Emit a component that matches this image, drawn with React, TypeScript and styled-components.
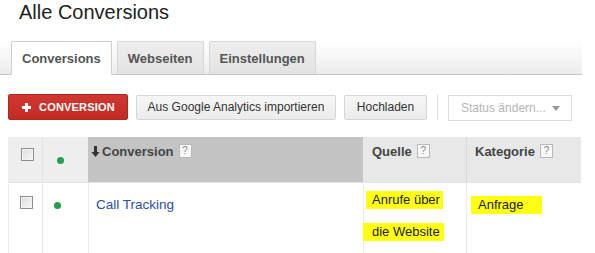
import React from 'react';
import styled, { createGlobalStyle } from 'styled-components';

const GlobalStyle = createGlobalStyle`
  html, body {
    margin: 0;
    padding: 0;
    background: #ffffff;
    font-family: 'Liberation Sans', Arial, sans-serif;
  }
`;

const Page = styled.div`
  width: 595px;
  height: 253px;
  overflow: hidden;
  background: #fff;
`;

const Title = styled.h1`
  margin: 0 0 16px 19px;
  font-size: 20px;
  line-height: 24px;
  font-weight: normal;
  color: #222;
`;

const TabBar = styled.div`
  height: 34px;
  display: flex;
  align-items: flex-end;
  gap: 5px;
  padding-left: 11px;
  margin-right: 13px;
  border-bottom: 1px solid #c6c6c6;
  background: linear-gradient(to bottom, #ffffff 0%, #f6f6f6 55%, #ebebeb 100%);
`;

const Tab = styled.div<{ $active?: boolean }>`
  height: ${({ $active }) => ($active ? '34px' : '33px')};
  margin-bottom: ${({ $active }) => ($active ? '-1px' : '0')};
  padding: 0 10px;
  display: flex;
  align-items: center;
  box-sizing: border-box;
  border: 1px solid ${({ $active }) => ($active ? '#cfcfcf' : '#d6d6d6')};
  border-bottom: ${({ $active }) => ($active ? '1px solid #fff' : 'none')};
  border-radius: 2px 2px 0 0;
  background: ${({ $active }) =>
    $active ? '#ffffff' : 'linear-gradient(to bottom, #eeeeee, #e2e2e2)'};
  font-size: 13px;
  font-weight: bold;
  color: #555;
`;

const Toolbar = styled.div`
  display: flex;
  align-items: center;
  height: 26px;
  margin: 19px 0 0 8px;
`;

const RedButton = styled.button`
  width: 120px;
  height: 26px;
  display: flex;
  align-items: center;
  gap: 8px;
  padding: 0 0 0 13px;
  border: 1px solid #b0271f;
  border-radius: 2px;
  background: linear-gradient(to bottom, #d0382f, #c12b23);
  color: #fff;
  font-family: inherit;
  font-size: 11px;
  font-weight: bold;
  letter-spacing: 0.2px;
`;

const GrayButton = styled.button<{ $width: number }>`
  width: ${({ $width }) => $width}px;
  height: 25px;
  margin-left: 8px;
  padding: 0;
  border: 1px solid #d6d6d6;
  border-radius: 2px;
  background: linear-gradient(to bottom, #f6f6f6, #ececec);
  color: #333;
  font-family: inherit;
  font-size: 12px;
`;

const Divider = styled.div`
  width: 1px;
  height: 26px;
  margin: 0 10px;
  background: #e3e3e3;
`;

const Select = styled.div`
  width: 124px;
  height: 26px;
  box-sizing: border-box;
  margin-top: 2px;
  border: 1px solid #dcdcdc;
  display: flex;
  align-items: center;
  padding-left: 12px;
  gap: 6px;
  color: #b5b5b5;
  font-size: 12px;
`;

const Table = styled.div`
  margin: 17px 0 0 8px;
  display: grid;
  grid-template-columns: 34px 46px 275px 103px 115px;
  grid-template-rows: 46px 70px;
`;

const HeadCell = styled.div<{ $bg: string; $pl?: number; $line?: string }>`
  background: ${({ $bg }) => $bg};
  border-left: 1px solid ${({ $line }) => $line || 'transparent'};
  border-bottom: 1px solid #e4e4e4;
  padding: 7px 0 0 ${({ $pl }) => $pl ?? 8}px;
  box-sizing: border-box;
  display: flex;
  align-items: flex-start;
  font-size: 13px;
  line-height: 16px;
  font-weight: bold;
  color: #444;
`;

const BodyCell = styled.div<{ $pl?: number; $pt?: number }>`
  border-left: 1px solid #ebebeb;
  padding: ${({ $pt }) => $pt ?? 14}px 0 0 ${({ $pl }) => $pl ?? 8}px;
  box-sizing: border-box;
  font-size: 13px;
  line-height: 16px;
  color: #222;
`;

const Checkbox = styled.span<{ $top: number }>`
  display: block;
  width: 13px;
  height: 13px;
  margin-top: ${({ $top }) => $top}px;
  box-sizing: border-box;
  border: 1px solid #8e8e8e;
  background: linear-gradient(135deg, #dcdcdc, #f8f8f8);
  box-shadow: inset 0 0 0 1px #f4f4f4;
`;

const Dot = styled.span<{ $top: number }>`
  display: block;
  width: 7px;
  height: 7px;
  border-radius: 50%;
  background: #23a04f;
  margin-top: ${({ $top }) => $top}px;
`;

const Help = styled.span`
  display: inline-flex;
  align-items: center;
  justify-content: center;
  width: 11px;
  height: 12px;
  margin: 0 0 0 5px;
  border: 1px solid #b9b9b9;
  background: #f7f7f7;
  color: #888;
  font-size: 10px;
  font-weight: normal;
  line-height: 1;
`;

const Link = styled.a`
  color: #2a4ea6;
  font-size: 13.5px;
  text-decoration: none;
`;

const MarkerLine = styled.div`
  height: 32px;
  display: flex;
  align-items: center;
`;

const Marker = styled.span<{ $l: number; $r: number }>`
  display: inline-block;
  background: #ffff14;
  line-height: 16px;
  padding: 1px ${({ $r }) => $r}px 1px ${({ $l }) => $l}px;
  margin-left: -${({ $l }) => $l}px;
`;

const Plus = () => (
  <svg width="9" height="9" viewBox="0 0 9 9">
    <path d="M3 0h3v3h3v3H6v3H3V6H0V3h3z" fill="#fff" />
  </svg>
);

const SortArrow = () => (
  <svg width="9" height="11" viewBox="0 0 9 11" style={{ marginTop: 2, marginRight: 2 }}>
    <path d="M3 0h3v6h2.6L4.5 11 0.4 6H3z" fill="#333" />
  </svg>
);

export default function App() {
  return (
    <Page>
      <GlobalStyle />
      <Title>Alle Conversions</Title>
      <TabBar>
        <Tab $active>Conversions</Tab>
        <Tab>Webseiten</Tab>
        <Tab>Einstellungen</Tab>
      </TabBar>
      <Toolbar>
        <RedButton>
          <Plus />
          CONVERSION
        </RedButton>
        <GrayButton $width={200}>Aus Google Analytics importieren</GrayButton>
        <GrayButton $width={83}>Hochladen</GrayButton>
        <Divider />
        <Select>
          Status ändern...
          <svg width="8" height="5" viewBox="0 0 8 5">
            <path d="M0 0h8L4 5z" fill="#999" />
          </svg>
        </Select>
      </Toolbar>
      <Table>
        <HeadCell $bg="#eeeeee" $pl={12}>
          <Checkbox $top={4} />
        </HeadCell>
        <HeadCell $bg="#eeeeee" $line="#e2e2e2" $pl={14}>
          <Dot $top={13} />
        </HeadCell>
        <HeadCell $bg="#c4c4c4" $pl={2}>
          <SortArrow />
          Conversion
          <Help>?</Help>
        </HeadCell>
        <HeadCell $bg="#e8e8e8">
          Quelle
          <Help>?</Help>
        </HeadCell>
        <HeadCell $bg="#e8e8e8" $line="#dadada">
          Kategorie
          <Help>?</Help>
        </HeadCell>

        <BodyCell $pl={11} $pt={0}>
          <Checkbox $top={13} />
        </BodyCell>
        <BodyCell $pl={11} $pt={0}>
          <Dot $top={19} />
        </BodyCell>
        <BodyCell $pl={7}>
          <Link href="#">Call Tracking</Link>
        </BodyCell>
        <BodyCell $pl={8} $pt={1}>
          <MarkerLine>
            <Marker $l={6} $r={3}>Anrufe über</Marker>
          </MarkerLine>
          <MarkerLine>
            <Marker $l={9} $r={4}>die Website</Marker>
          </MarkerLine>
        </BodyCell>
        <BodyCell $pl={11} $pt={13}>
          <Marker $l={7} $r={18}>Anfrage</Marker>
        </BodyCell>
      </Table>
    </Page>
  );
}
